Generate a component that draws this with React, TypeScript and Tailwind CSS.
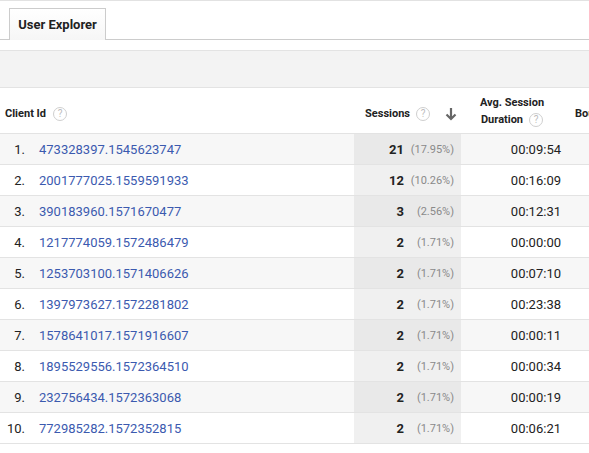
import React from "react";

type Row = { id: string; sessions: number; pct: string; dur: string };

const rows: Row[] = [
  { id: "473328397.1545623747", sessions: 21, pct: "(17.95%)", dur: "00:09:54" },
  { id: "2001777025.1559591933", sessions: 12, pct: "(10.26%)", dur: "00:16:09" },
  { id: "390183960.1571670477", sessions: 3, pct: "(2.56%)", dur: "00:12:31" },
  { id: "1217774059.1572486479", sessions: 2, pct: "(1.71%)", dur: "00:00:00" },
  { id: "1253703100.1571406626", sessions: 2, pct: "(1.71%)", dur: "00:07:10" },
  { id: "1397973627.1572281802", sessions: 2, pct: "(1.71%)", dur: "00:23:38" },
  { id: "1578641017.1571916607", sessions: 2, pct: "(1.71%)", dur: "00:00:11" },
  { id: "1895529556.1572364510", sessions: 2, pct: "(1.71%)", dur: "00:00:34" },
  { id: "232756434.1572363068", sessions: 2, pct: "(1.71%)", dur: "00:00:19" },
  { id: "772985282.1572352815", sessions: 2, pct: "(1.71%)", dur: "00:06:21" },
];

function Help() {
  return (
    <span className="inline-flex items-center justify-center w-[14px] h-[14px] rounded-full border border-[#cfcfcf] text-[10px] leading-none text-[#bdbdbd] font-normal">
      ?
    </span>
  );
}

function ArrowDown() {
  return (
    <svg width="12" height="14" viewBox="0 0 12 14" className="text-[#666]">
      <path d="M6 1v11M1.5 7.5L6 12l4.5-4.5" stroke="currentColor" strokeWidth="2.2" fill="none" />
    </svg>
  );
}

export default function App() {
  return (
    <div
      className="w-[589px] h-[453px] overflow-hidden bg-white text-[#222]"
      style={{ fontFamily: "Roboto, 'Liberation Sans', sans-serif" }}
    >
      {/* tab strip */}
      <div className="border-t border-[#e2e2e2] h-[40px] pt-[7px] pl-[9px] border-b border-b-[#cccccc] flex">
        <div className="w-[97px] h-[32px] border border-b-0 border-[#cccccc] bg-gradient-to-b from-white to-[#f6f6f6] flex items-center justify-center text-[13px] font-bold -mb-px relative">
          User Explorer
        </div>
      </div>
      <div className="h-[10px]" />
      <div className="h-[38px] border-y border-[#e3e3e3] bg-[#f3f3f3]" />

      {/* header */}
      <div className="flex h-[46px] border-b border-[#e3e3e3] text-[11px] font-bold w-[700px]">
        <div className="w-[354px] flex items-center gap-[7px] pl-[5px] pt-[7px]">
          Client Id <Help />
        </div>
        <div className="w-[107px] flex items-center justify-end pr-[3px] pt-[7px]">
          <span>Sessions</span>
          <span className="ml-[6px]"><Help /></span>
          <span className="ml-[15px] mr-[1px] flex"><ArrowDown /></span>
        </div>
        <div className="w-[107px] flex flex-col items-center justify-center pr-[5px] leading-[17px] pt-[1px]">
          <span>Avg. Session</span>
          <span className="flex items-center gap-[6px]">Duration <Help /></span>
        </div>
        <div className="flex items-center pl-[7px] pt-[7px]">Bounce Rate</div>
      </div>

      {/* rows */}
      {rows.map((r, i) => {
        const odd = i % 2 === 0;
        return (
          <div
            key={r.id}
            className={`flex h-[31px] border-b border-[#e3e3e3] text-[13px] w-[700px] ${odd ? "bg-[#f7f7f7]" : "bg-white"}`}
          >
            <div className="w-[354px] flex items-center pt-[2px]">
              <span className="w-[25px] text-right">{i + 1}.</span>
              <span className="ml-[14px] text-[#3b5aaf]">{r.id}</span>
            </div>
            <div className={`w-[107px] flex items-center justify-end pr-[7px] pt-[2px] ${odd ? "bg-[#e9e9e9]" : "bg-[#f0f0f0]"}`}>
              <span className="font-bold">{r.sessions}</span>
              <span className="w-[50px] text-right text-[11px] text-[#8a8a8a]">{r.pct}</span>
            </div>
            <div className="w-[107px] flex items-center justify-end pr-[7px] pt-[2px]">{r.dur}</div>
            <div className="flex-1" />
          </div>
        );
      })}
    </div>
  );
}
